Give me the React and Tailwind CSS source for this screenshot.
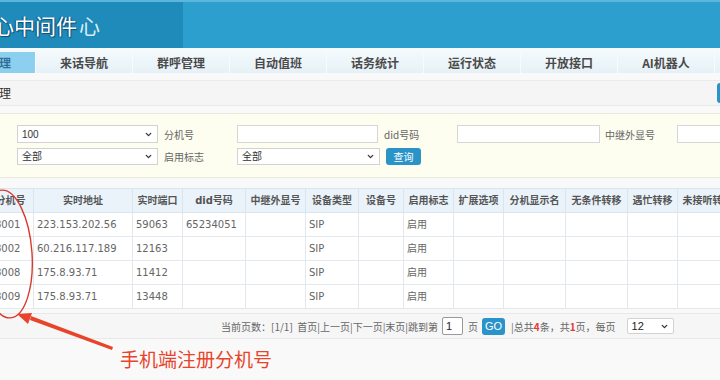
import React from "react";
import { ChevronDown } from "lucide-react";

const tabs = ["分机管理", "来话导航", "群呼管理", "自动值班", "话务统计", "运行状态", "开放接口", "AI机器人"];

const cols = [
  { name: "分机号", w: "w-[46px]" },
  { name: "实时地址", w: "w-[99px]" },
  { name: "实时端口", w: "w-[50px]" },
  { name: "did号码", w: "w-[63px]" },
  { name: "中继外显号", w: "w-[60px]" },
  { name: "设备类型", w: "w-[53px]" },
  { name: "设备号", w: "w-[45px]" },
  { name: "启用标志", w: "w-[50px]" },
  { name: "扩展选项", w: "w-[50px]" },
  { name: "分机显示名", w: "w-[62px]" },
  { name: "无条件转移", w: "w-[62px]" },
  { name: "遇忙转移", w: "w-[50px]" },
  { name: "未接听转移", w: "w-[60px]" },
];

const rows = [
  ["8001", "223.153.202.56", "59063", "65234051", "", "SIP", "", "启用"],
  ["8002", "60.216.117.189", "12163", "", "", "SIP", "", "启用"],
  ["8008", "175.8.93.71", "11412", "", "", "SIP", "", "启用"],
  ["8009", "175.8.93.71", "13448", "", "", "SIP", "", "启用"],
];

function Select({ value, className }) {
  return (
    <div
      className={`shrink-0 flex items-center justify-between bg-white border border-[#d2d2d2] pl-[4px] pr-[4px] text-[10px] text-[#333] font-['Liberation_Sans','Noto_Sans_CJK_SC',sans-serif] ${className}`}
    >
      <span>{value}</span>
      <ChevronDown size={9} strokeWidth={3.5} className="text-[#333]" />
    </div>
  );
}

function Input({ className }) {
  return <div className={`shrink-0 bg-white border border-[#d6d6d6] ${className}`} />;
}

export default function App() {
  return (
    <div className="relative w-[720px] h-[380px] overflow-hidden bg-[#f9f9f9] font-['Noto_Sans_CJK_SC',sans-serif]">
      {/* header */}
      <div className="flex h-[48px] border-t-2 border-[#5cb6dc]">
        <div className="w-[183px] bg-[#1f8bbb] flex items-center overflow-hidden">
          <span className="-ml-[7px] text-[21px] leading-none text-white [text-shadow:1px_1px_1px_#0b4f73,-1px_0_1px_#0b4f73]">
            心中间件
          </span>
          <span className="ml-[2px] text-[21px] leading-none text-[#d6eef8] [text-shadow:0_0_1px_#1b7fab]">心</span>
        </div>
        <div className="flex-1 bg-[#2d9fcf]" />
      </div>

      {/* nav */}
      <div className="h-[25px] pt-[4px] bg-gradient-to-b from-[#f6fbfd] to-[#e5f1f7] flex overflow-hidden">
        {tabs.map((t, i) => (
          <div
            key={t}
            className={`shrink-0 w-[97px] h-[21px] flex items-center justify-center text-[12px] font-bold border-r border-[#f7fbfd] ${
              i === 0 ? "-ml-[61px] bg-[#8ccfee] text-[#2f6f98]" : "text-[#4a4a4a]"
            }`}
          >
            {t}
          </div>
        ))}
      </div>

      {/* breadcrumb */}
      <div className="mt-[7px] h-[26px] bg-[#f5f5f5] border-y border-[#ebebeb] flex items-center justify-between overflow-hidden">
        <span className="-ml-[37px] text-[12px] text-[#333]">分机管理</span>
        <div className="w-[12px] h-[20px] -mr-[9px] rounded-[3px] bg-[#2a93c9]" />
      </div>

      {/* filter panel */}
      <div className="mt-[7px] h-[65px] bg-[#fdfdf0] border-y border-[#e8e8dc] pl-[17px] pt-[11px] flex flex-col gap-[5px] text-[10px] text-[#666] overflow-hidden">
        <div className="flex items-center h-[18px]">
          <Select value="100" className="w-[141px] h-[18px]" />
          <span className="shrink-0 w-[79px] pl-[6px]">分机号</span>
          <Input className="w-[141px] h-[18px]" />
          <span className="shrink-0 w-[79px] pl-[6px]">did号码</span>
          <Input className="w-[143px] h-[18px]" />
          <span className="shrink-0 w-[77px] pl-[5px]">中继外显号</span>
          <Input className="w-[60px] h-[18px]" />
        </div>
        <div className="flex items-center h-[17px]">
          <Select value="全部" className="w-[141px] h-[17px]" />
          <span className="shrink-0 w-[79px] pl-[6px]">启用标志</span>
          <Select value="全部" className="w-[143px] h-[17px]" />
          <button className="ml-[6px] w-[35px] h-[17px] rounded-[3px] bg-[#2a94c8] text-white text-[10px] leading-none">
            查询
          </button>
        </div>
      </div>

      {/* table */}
      <div className="mt-[10px] overflow-hidden">
        <table className="-ml-[13px] w-[750px] table-fixed border-collapse">
          <colgroup>
            {cols.map((c) => (
              <col key={c.name} className={c.w} />
            ))}
          </colgroup>
          <thead>
            <tr className="h-[24px] bg-[#eaf3fa]">
              {cols.map((c) => (
                <th
                  key={c.name}
                  className="border border-[#dbe5ee] text-[10px] font-bold text-[#555] whitespace-nowrap overflow-hidden font-['DejaVu_Sans','Noto_Sans_CJK_SC',sans-serif]"
                >
                  {c.name}
                </th>
              ))}
            </tr>
          </thead>
          <tbody>
            {rows.map((r) => (
              <tr key={r[0]} className="h-[24px] bg-white">
                {cols.map((c, j) => (
                  <td
                    key={c.name}
                    className={`border border-[#e2e8ee] text-[10px] text-[#666] whitespace-nowrap overflow-hidden font-['DejaVu_Sans','Noto_Sans_CJK_SC',sans-serif] ${
                      j === 0 ? "pl-[7px]" : "pl-[3px]"
                    }`}
                  >
                    {r[j] || ""}
                  </td>
                ))}
              </tr>
            ))}
          </tbody>
        </table>
      </div>

      {/* pagination */}
      <div className="mt-[4px] h-[26px] bg-[#f6f6f6] border-y border-[#e8e8e8] flex items-center pl-[221px] text-[10px] text-[#666] whitespace-nowrap">
        <span>当前页数：[1/1]&nbsp;&nbsp;首页|上一页|下一页|末页|跳到第</span>
        <div className="ml-[4px] w-[21px] h-[18px] bg-white border border-[#999] rounded-[2px] flex items-center pl-[3px] text-[11px] text-[#222] font-['Liberation_Sans',sans-serif]">
          1
        </div>
        <span className="ml-[5px]">页</span>
        <button className="ml-[4px] w-[23px] h-[17px] rounded-[3px] bg-[#2a93c9] text-white text-[11px] leading-none font-['Liberation_Sans',sans-serif]">
          GO
        </button>
        <span className="ml-[6px]">
          |总共<b className="text-[#e53935]">4</b>条，共<b className="text-[#e53935]">1</b>页，每页
        </span>
        <Select value="12" className="ml-[11px] w-[47px] h-[16px] !text-[11px] !text-[#222] border-[#999] rounded-[2px]" />
      </div>

      {/* annotation */}
      <div className="pl-[120px] pt-[5px] text-[19px] leading-[30px] text-[#e8442c]">手机端注册分机号</div>

      <svg className="absolute inset-0 pointer-events-none" width="720" height="380" viewBox="0 0 720 380">
        <ellipse cx="6" cy="254" rx="26" ry="64" transform="rotate(-4 6 254)" fill="none" stroke="#d93a2c" strokeWidth="1.4" />
        <polygon points="113,347 112,350 30,320 31,316" fill="#e8442c" />
        <polygon points="17,314 32,313 28,324" fill="#e8442c" />
      </svg>
    </div>
  );
}
